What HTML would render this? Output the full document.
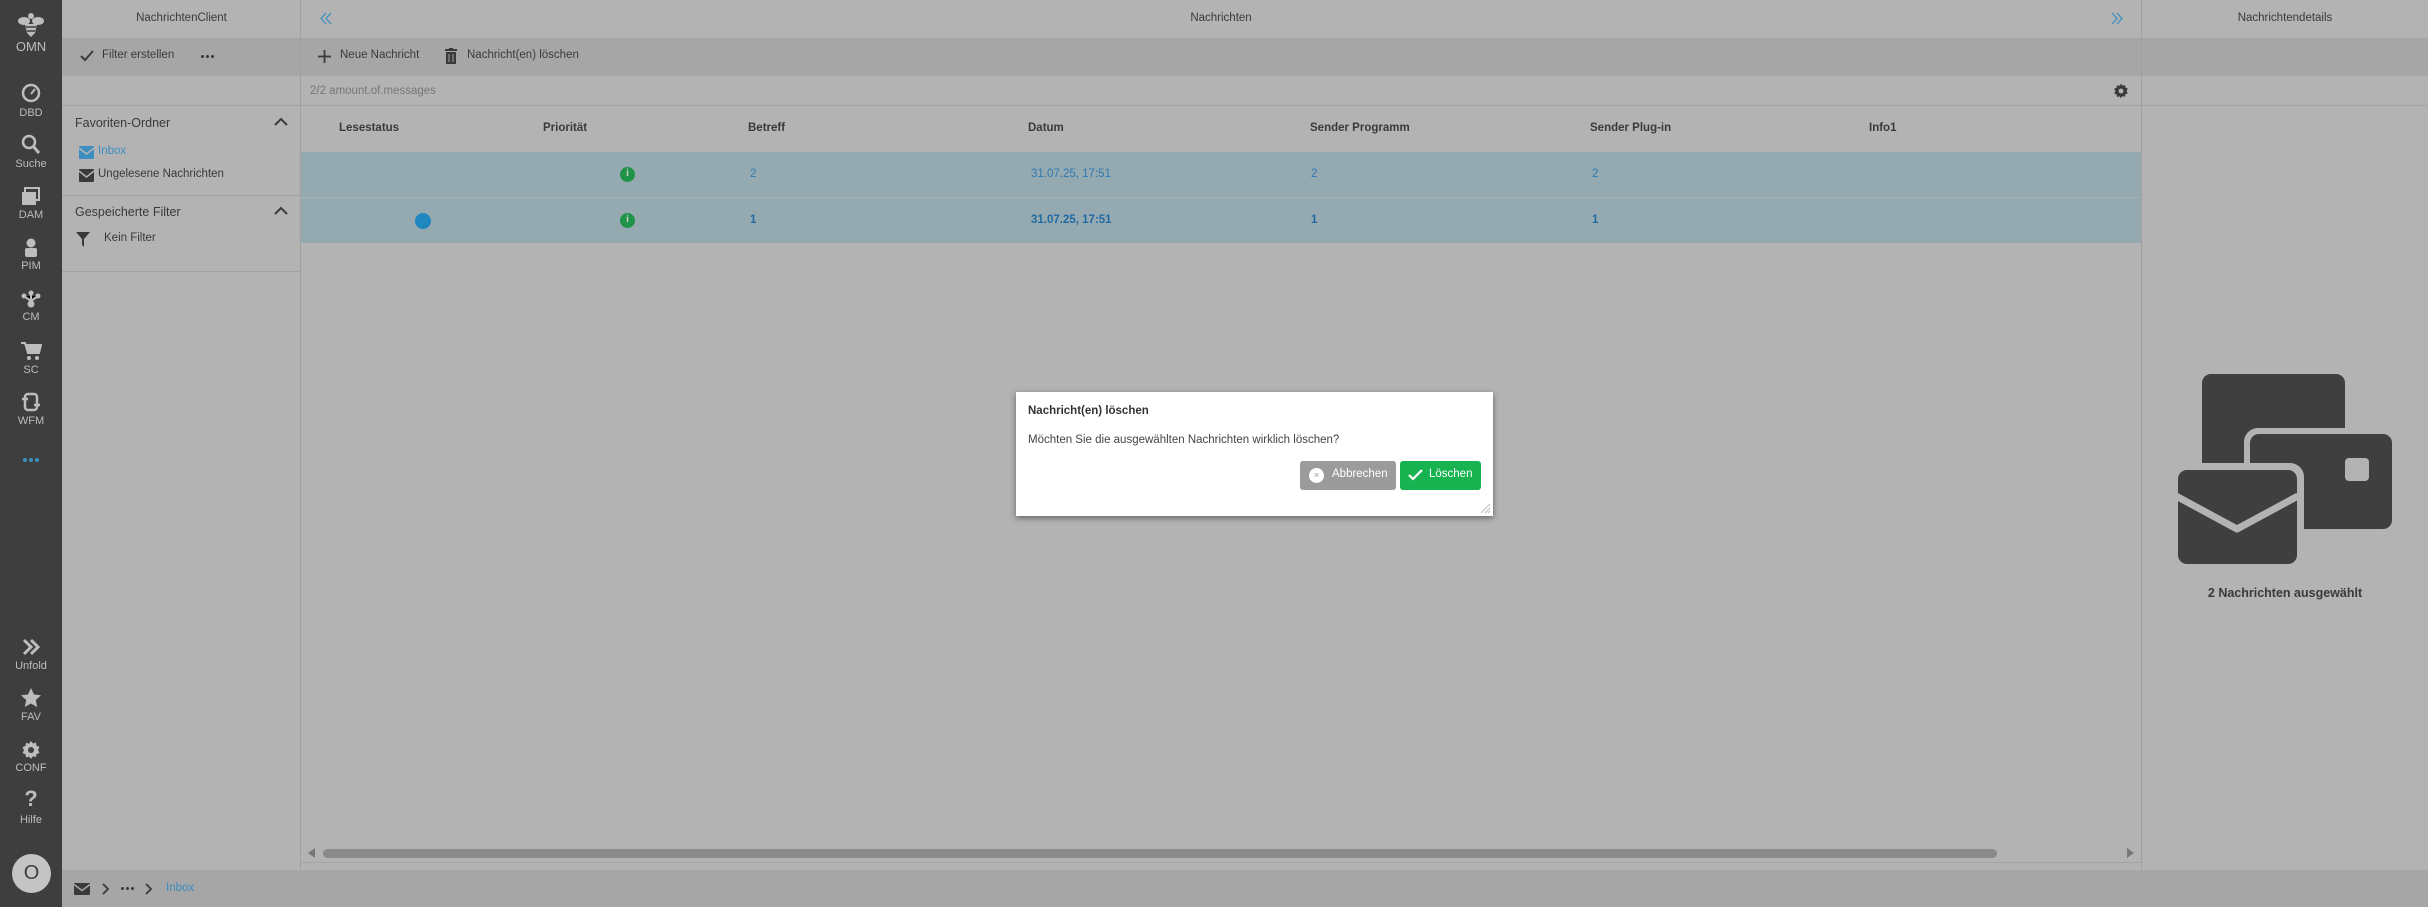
<!DOCTYPE html>
<html><head><meta charset="utf-8"><style>
*{margin:0;padding:0;box-sizing:border-box}
body{width:2428px;height:907px;overflow:hidden;background:#b3b3b3;font-family:"Liberation Sans",sans-serif;color:#333;position:relative}
.a{position:absolute}
.sb{left:0;top:0;width:62px;height:907px;background:#3e3e3e}
.si{position:absolute;left:0;width:62px;text-align:center;color:#bdbdbd;font-size:11px}
.t{position:absolute;white-space:nowrap;font-size:13px;color:#3a3a3a}
.vl{position:absolute;width:1px;background:#a0a0a0}
.hl{position:absolute;height:1px;background:#a3a3a3}
.dots{position:absolute;display:flex;gap:2px}
.dots i{display:block;width:3px;height:3px;border-radius:50%;background:#3a3a3a}
</style></head><body>
<div class="a sb"></div>
<svg class="a" style="left:17px;top:12px" width="28" height="26" viewBox="0 0 28 26"><g fill="#bdbdbd"><circle cx="14" cy="4" r="3"/><ellipse cx="7" cy="9" rx="6" ry="4"/><ellipse cx="21" cy="9" rx="6" ry="4"/><path d="M8 12h12l-2 9-4 4-4-4z"/></g><path d="M9 15h10M10 19h8" stroke="#3e3e3e" stroke-width="1.5"/></svg>
<div class="si" style="top:39px;font-size:13px">OMN</div>
<svg class="a" style="left:21px;top:83px" width="20" height="20"><circle cx="10" cy="10" r="8" fill="none" stroke="#bdbdbd" stroke-width="2.5"/><path d="M10 11l4-5" stroke="#bdbdbd" stroke-width="2"/></svg>
<div class="si" style="top:107px">DBD</div>
<svg class="a" style="left:21px;top:134px" width="20" height="22"><circle cx="8" cy="8" r="6" fill="none" stroke="#bdbdbd" stroke-width="2.5"/><path d="M12 12l6 7" stroke="#bdbdbd" stroke-width="3"/></svg>
<div class="si" style="top:158px">Suche</div>
<svg class="a" style="left:21px;top:187px" width="20" height="20"><rect x="4" y="1" width="14" height="12" fill="none" stroke="#bdbdbd" stroke-width="2"/><rect x="1" y="5" width="14" height="13" fill="#bdbdbd"/></svg>
<div class="si" style="top:209px">DAM</div>
<svg class="a" style="left:22px;top:238px" width="18" height="20"><circle cx="9" cy="5" r="4.5" fill="#bdbdbd"/><rect x="3" y="10" width="12" height="9" rx="2" fill="#bdbdbd"/></svg>
<div class="si" style="top:260px">PIM</div>
<svg class="a" style="left:21px;top:290px" width="20" height="18"><g fill="#bdbdbd"><circle cx="10" cy="3" r="2.5"/><circle cx="3" cy="6" r="2.5"/><circle cx="17" cy="6" r="2.5"/><circle cx="10" cy="14" r="3.5"/></g><path d="M3 6l7 5 7-5M10 3v8" stroke="#bdbdbd" stroke-width="2"/></svg>
<div class="si" style="top:311px">CM</div>
<svg class="a" style="left:20px;top:341px" width="22" height="20"><path d="M1 2h4l3 10h11l2-8H6" fill="#bdbdbd" stroke="#bdbdbd" stroke-width="2"/><circle cx="9" cy="17" r="2" fill="#bdbdbd"/><circle cx="17" cy="17" r="2" fill="#bdbdbd"/></svg>
<div class="si" style="top:364px">SC</div>
<svg class="a" style="left:21px;top:392px" width="20" height="20"><rect x="4" y="2" width="12" height="16" rx="3" fill="none" stroke="#bdbdbd" stroke-width="2.5"/><path d="M1 7h6M13 13h6" stroke="#bdbdbd" stroke-width="2.5"/></svg>
<div class="si" style="top:415px">WFM</div>
<div class="dots" style="left:23px;top:458px"><i style="background:#3a8fc0;width:4px;height:4px"></i><i style="background:#3a8fc0;width:4px;height:4px"></i><i style="background:#3a8fc0;width:4px;height:4px"></i></div>
<svg class="a" style="left:21px;top:638px" width="20" height="18"><path d="M3 2l7 7-7 7M10 2l7 7-7 7" fill="none" stroke="#bdbdbd" stroke-width="3"/></svg>
<div class="si" style="top:660px">Unfold</div>
<svg class="a" style="left:21px;top:688px" width="20" height="20"><path d="M10 0l3 6.5 7 .8-5.2 4.8 1.4 7L10 15.5 3.8 19l1.4-7L0 7.3l7-.8z" fill="#bdbdbd"/></svg>
<div class="si" style="top:711px">FAV</div>
<svg class="a" style="left:21px;top:740px" width="20" height="20" viewBox="0 0 20 20"><path d="M10 1l2 2.5 3-1 .5 3.2 3 1.2-1.5 3 1.5 3-3 1.2-.5 3.2-3-1L10 19l-2-2.5-3 1-.5-3.2-3-1.2 1.5-3-1.5-3 3-1.2.5-3.2 3 1z" fill="#bdbdbd"/><circle cx="10" cy="10" r="3" fill="#3e3e3e"/></svg>
<div class="si" style="top:762px">CONF</div>
<div class="si" style="top:786px;font-size:22px;font-weight:bold">?</div>
<div class="si" style="top:814px">Hilfe</div>
<div class="a" style="left:12px;top:854px;width:39px;height:39px;border-radius:50%;background:#c4c4c4;color:#3e3e3e;font-size:20px;text-align:center;line-height:39px">O</div>

<div class="a" style="left:62px;top:38px;width:2366px;height:38px;background:#a6a6a6"></div>
<div class="hl" style="left:62px;top:105px;width:2366px"></div>
<div class="hl" style="left:62px;top:195px;width:239px"></div>
<div class="hl" style="left:62px;top:271px;width:239px"></div>
<div class="vl" style="left:300px;top:0;height:870px"></div>
<div class="vl" style="left:2141px;top:0;height:870px"></div>
<div class="a" style="left:62px;top:870px;width:2366px;height:37px;background:#a6a6a6"></div>

<div class="t" style="left:62px;width:239px;text-align:center;top:12px;font-size:11.5px">NachrichtenClient</div>
<svg class="a" style="left:80px;top:50px" width="14" height="12"><path d="M1 6l4 4 8-9" fill="none" stroke="#3a3a3a" stroke-width="2"/></svg>
<div class="t" style="left:102px;top:49px;font-size:11.5px">Filter erstellen</div>
<div class="dots" style="left:201px;top:55px"><i></i><i></i><i></i></div>
<div class="t" style="left:75px;top:116px;font-size:12.5px">Favoriten-Ordner</div>
<svg class="a" style="left:274px;top:117px" width="14" height="10"><path d="M1 8l6-6 6 6" fill="none" stroke="#3a3a3a" stroke-width="2"/></svg>
<svg class="a" style="left:79px;top:146px" width="15" height="13"><rect width="15" height="13" rx="1" fill="#3b8fc0"/><path d="M0 2l7.5 6L15 2" fill="none" stroke="#b3b3b3" stroke-width="1.5"/></svg>
<div class="t" style="left:98px;top:145px;font-size:11.5px;color:#3b8fc0">Inbox</div>
<svg class="a" style="left:79px;top:169px" width="15" height="13"><rect width="15" height="13" rx="1" fill="#3a3a3a"/><path d="M0 2l7.5 6L15 2" fill="none" stroke="#b3b3b3" stroke-width="1.5"/></svg>
<div class="t" style="left:98px;top:168px;font-size:11.5px">Ungelesene Nachrichten</div>
<div class="t" style="left:75px;top:205px;font-size:12.5px">Gespeicherte Filter</div>
<svg class="a" style="left:274px;top:206px" width="14" height="10"><path d="M1 8l6-6 6 6" fill="none" stroke="#3a3a3a" stroke-width="2"/></svg>
<svg class="a" style="left:76px;top:232px" width="14" height="15"><path d="M0 0h14L8 7v8L6 13V7z" fill="#3a3a3a"/></svg>
<div class="t" style="left:104px;top:232px;font-size:11.5px">Kein Filter</div>

<svg class="a" style="left:319px;top:12px" width="14" height="13"><path d="M7 1L2 6.5 7 12M12 1L7 6.5 12 12" fill="none" stroke="#3b8fc0" stroke-width="1.3"/></svg>
<div class="t" style="left:301px;width:1840px;text-align:center;top:12px;font-size:11.5px">Nachrichten</div>
<svg class="a" style="left:2110px;top:12px" width="14" height="13"><path d="M2 1l5 5.5L2 12M7 1l5 5.5L7 12" fill="none" stroke="#3b8fc0" stroke-width="1.3"/></svg>
<svg class="a" style="left:318px;top:50px" width="13" height="13"><path d="M6.5 0v13M0 6.5h13" stroke="#3a3a3a" stroke-width="1.8"/></svg>
<div class="t" style="left:340px;top:49px;font-size:11.5px">Neue Nachricht</div>
<svg class="a" style="left:445px;top:48px" width="12" height="16"><rect x="0" y="1" width="12" height="2" fill="#3a3a3a"/><rect x="4" y="0" width="4" height="2" fill="#3a3a3a"/><rect x="1" y="4" width="10" height="12" fill="#3a3a3a"/><path d="M4 6v8M8 6v8" stroke="#a6a6a6" stroke-width="1"/></svg>
<div class="t" style="left:467px;top:49px;font-size:11.5px">Nachricht(en) löschen</div>
<div class="t" style="left:310px;top:85px;font-size:11.5px;color:#777">2/2 amount.of.messages</div>
<svg class="a" style="left:2113px;top:83px" width="16" height="16" viewBox="0 0 20 20"><path d="M10 1l2 2.5 3-1 .5 3.2 3 1.2-1.5 3 1.5 3-3 1.2-.5 3.2-3-1L10 19l-2-2.5-3 1-.5-3.2-3-1.2 1.5-3-1.5-3 3-1.2.5-3.2 3 1z" fill="#3a3a3a"/><circle cx="10" cy="10" r="3" fill="#b3b3b3"/></svg>
<div class="t" style="left:339px;top:122px;font-size:11.5px;font-weight:bold">Lesestatus</div>
<div class="t" style="left:543px;top:122px;font-size:11.5px;font-weight:bold">Priorität</div>
<div class="t" style="left:748px;top:122px;font-size:11.5px;font-weight:bold">Betreff</div>
<div class="t" style="left:1028px;top:122px;font-size:11.5px;font-weight:bold">Datum</div>
<div class="t" style="left:1310px;top:122px;font-size:11.5px;font-weight:bold">Sender Programm</div>
<div class="t" style="left:1590px;top:122px;font-size:11.5px;font-weight:bold">Sender Plug-in</div>
<div class="t" style="left:1869px;top:122px;font-size:11.5px;font-weight:bold">Info1</div>
<div class="a" style="left:301px;top:152px;width:1840px;height:91px;background:#95a9b1"></div>
<div class="hl" style="left:301px;top:197px;width:1840px;background:#a2b3b9"></div>
<div class="a" style="left:620px;top:167px;width:15px;height:15px;border-radius:50%;background:#1f9348"></div>
<div class="a" style="left:620px;top:213px;width:15px;height:15px;border-radius:50%;background:#1f9348"></div>
<div class="t" style="left:620px;top:168px;width:15px;text-align:center;font-size:10px;color:#ccc;font-weight:bold">i</div>
<div class="t" style="left:620px;top:214px;width:15px;text-align:center;font-size:10px;color:#ccc;font-weight:bold">i</div>
<div class="a" style="left:415px;top:213px;width:16px;height:16px;border-radius:50%;background:#1f86bf"></div>
<div class="t" style="left:750px;top:168px;font-size:11.5px;color:#2b7ab3">2</div>
<div class="t" style="left:1031px;top:168px;font-size:11.5px;color:#2b7ab3">31.07.25, 17:51</div>
<div class="t" style="left:1311px;top:168px;font-size:11.5px;color:#2b7ab3">2</div>
<div class="t" style="left:1592px;top:168px;font-size:11.5px;color:#2b7ab3">2</div>
<div class="t" style="left:750px;top:214px;font-size:11.5px;color:#1f6aa3;font-weight:bold">1</div>
<div class="t" style="left:1031px;top:214px;font-size:11.5px;color:#1f6aa3;font-weight:bold">31.07.25, 17:51</div>
<div class="t" style="left:1311px;top:214px;font-size:11.5px;color:#1f6aa3;font-weight:bold">1</div>
<div class="t" style="left:1592px;top:214px;font-size:11.5px;color:#1f6aa3;font-weight:bold">1</div>
<div class="hl" style="left:301px;top:862px;width:1840px"></div>
<svg class="a" style="left:308px;top:848px" width="8" height="10"><path d="M7 0v10L0 5z" fill="#777"/></svg>
<svg class="a" style="left:2126px;top:848px" width="8" height="10"><path d="M1 0v10l7-5z" fill="#777"/></svg>
<div class="a" style="left:323px;top:849px;width:1674px;height:9px;border-radius:5px;background:#8a8a8a"></div>

<div class="t" style="left:2142px;width:286px;text-align:center;top:12px;font-size:11.5px">Nachrichtendetails</div>
<svg class="a" style="left:0;top:0" width="2428" height="907">
<rect x="2202" y="374" width="143" height="150" rx="9" fill="#3f3f3f"/>
<rect x="2244" y="428" width="160" height="107" rx="14" fill="#b3b3b3"/>
<rect x="2250" y="434" width="142" height="95" rx="9" fill="#3f3f3f"/>
<rect x="2345" y="458" width="24" height="23" rx="4" fill="#b3b3b3"/>
<rect x="2171" y="463" width="133" height="108" rx="14" fill="#b3b3b3"/>
<rect x="2178" y="470" width="119" height="94" rx="9" fill="#3f3f3f"/>
<path d="M2176 496l61 33 61-33" fill="none" stroke="#b3b3b3" stroke-width="7" stroke-linejoin="round"/>
</svg>
<div class="t" style="left:2142px;width:286px;text-align:center;top:586px;font-size:12.5px;font-weight:bold">2 Nachrichten ausgewählt</div>

<svg class="a" style="left:74px;top:883px" width="16" height="12"><rect width="16" height="12" rx="1" fill="#3a3a3a"/><path d="M0 1.5l8 6 8-6" fill="none" stroke="#a6a6a6" stroke-width="1.5"/></svg>
<svg class="a" style="left:102px;top:883px" width="8" height="12"><path d="M1 1l5 5-5 5" fill="none" stroke="#3a3a3a" stroke-width="1.8"/></svg>
<div class="dots" style="left:121px;top:887px"><i></i><i></i><i></i></div>
<svg class="a" style="left:145px;top:883px" width="8" height="12"><path d="M1 1l5 5-5 5" fill="none" stroke="#3a3a3a" stroke-width="1.8"/></svg>
<div class="t" style="left:166px;top:882px;font-size:11.5px;color:#3b8fc0">Inbox</div>

<div class="a" style="left:1016px;top:392px;width:477px;height:124px;background:#fff;box-shadow:0 2px 6px rgba(0,0,0,.45)"></div>
<div class="t" style="left:1028px;top:405px;font-size:11.5px;font-weight:bold;color:#333">Nachricht(en) löschen</div>
<div class="t" style="left:1028px;top:434px;font-size:11.5px;color:#444">Möchten Sie die ausgewählten Nachrichten wirklich löschen?</div>
<div class="a" style="left:1300px;top:461px;width:96px;height:29px;border-radius:3px;background:#9b9b9b"></div>
<div class="a" style="left:1309px;top:468px;width:15px;height:15px;border-radius:50%;background:#fff;color:#9b9b9b;font-size:9px;text-align:center;line-height:15px">×</div>
<div class="t" style="left:1332px;top:468px;font-size:11.5px;color:#fff">Abbrechen</div>
<div class="a" style="left:1400px;top:461px;width:81px;height:29px;border-radius:3px;background:#17b350"></div>
<svg class="a" style="left:1408px;top:469px" width="15" height="12"><path d="M1 6l4 4 9-9" fill="none" stroke="#fff" stroke-width="2.2"/></svg>
<div class="t" style="left:1429px;top:468px;font-size:11.5px;color:#fff">Löschen</div>
<svg class="a" style="left:1479px;top:502px" width="12" height="12"><path d="M11 2L2 11M11 6L6 11M11 9L9 11" stroke="#bbb" stroke-width="1"/></svg>
</body></html>
